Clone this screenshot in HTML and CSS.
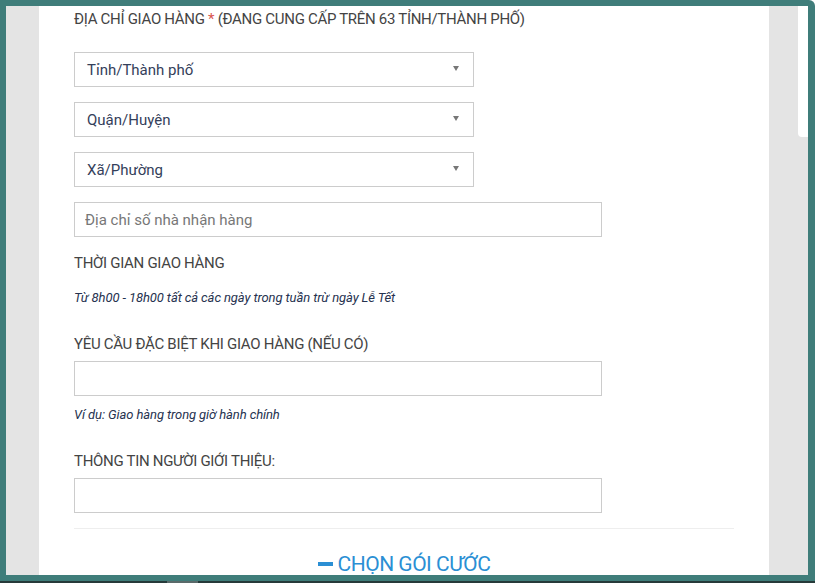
FILE: index.html
```html
<!DOCTYPE html>
<html lang="vi">
<head>
    <meta charset="UTF-8">
    <meta name="viewport" content="width=device-width, initial-scale=1.0">
    <title>Đăng ký dịch vụ</title>
    <link rel="stylesheet" href="styles.css">
</head>
<body>
    <div class="window">
        <div class="viewport">
            <div class="page">
                <!-- Địa chỉ giao hàng -->
                <form class="order-form">
                    <p class="label first">ĐỊA CHỈ GIAO HÀNG <span class="req">*</span> (ĐANG CUNG CẤP TRÊN 63 TỈNH/THÀNH PHỐ)</p>
                    <div class="select-box"><span>Tỉnh/Thành phố</span><i class="caret"></i></div>
                    <div class="select-box"><span>Quận/Huyện</span><i class="caret"></i></div>
                    <div class="select-box"><span>Xã/Phường</span><i class="caret"></i></div>
                    <input class="field" type="text" placeholder="Địa chỉ số nhà nhận hàng">

                    <p class="label">THỜI GIAN GIAO HÀNG</p>
                    <p class="hint">Từ 8h00 - 18h00 tất cả các ngày trong tuần trừ ngày Lễ Tết</p>

                    <p class="label spaced">YÊU CẦU ĐẶC BIỆT KHI GIAO HÀNG (NẾU CÓ)</p>
                    <input class="field" type="text">
                    <p class="hint">Ví dụ: Giao hàng trong giờ hành chính</p>

                    <p class="label spaced">THÔNG TIN NGƯỜI GIỚI THIỆU:</p>
                    <input class="field" type="text">
                </form>

                <hr class="divider">

                <h2 class="section-title"><span class="dash"></span>CHỌN GÓI CƯỚC</h2>
            </div>
            <div class="gutter"></div>
            <div class="side-panel"></div>
        </div>
        <div class="taskbar"><span class="task"></span></div>
    </div>
</body>
</html>
```

FILE: styles.css
```css
/* Khung cửa sổ */
* { box-sizing: border-box; }
html, body { margin: 0; padding: 0; background: #fff; }
body { font-family: Roboto, "Noto Sans", Arial, sans-serif; width: 819px; height: 583px; overflow: hidden; }

.window { width: 815px; height: 583px; background: #3f7d7a; border-top-right-radius: 6px; padding: 6px 7px 0 6px; display: flex; flex-direction: column; }
.viewport { flex: 0 0 569px; background: #e4e4e4; display: flex; padding-left: 33px; overflow: hidden; }
.taskbar { flex: 1; margin: 0 -7px 0 -6px; border-top: 6px solid #3f7d7a; background: #263a3a; position: relative; }
.task { position: absolute; left: 167px; top: 0; width: 31px; height: 2px; background: #5a6a6a; }

/* Nội dung trang */
.page { width: 730px; flex: none; background: #fff; padding: 0 35px; height: 569px; }
.gutter { width: 29px; flex: none; }
.side-panel { width: 10px; height: 131px; background: #fff; border-bottom-left-radius: 4px; flex: none; }

.order-form { display: flex; flex-direction: column; align-items: flex-start; }
.label { margin: 2px 0 16px; font-size: 15px; line-height: 18px; color: #444; letter-spacing: -0.3px; }
.label.first { margin: 4px 0 24px; }
.label.spaced { margin-top: 29px; margin-bottom: 8px; }
.req { color: #d9534f; }

.select-box { width: 400px; height: 35px; border: 1px solid #ccc; margin-bottom: 15px; display: flex; align-items: center; justify-content: space-between; padding: 0 14px 0 12px; font-size: 15px; color: #34405a; }
.caret { width: 0; height: 0; border-left: 3px solid transparent; border-right: 3px solid transparent; border-top: 5px solid #777; margin-top: -2px; }

.field { width: 528px; height: 35px; border: 1px solid #ccc; margin: 0 0 15px; padding: 0 10px; font-family: inherit; font-size: 15px; color: #34405a; }
.field::placeholder { color: #777; }

.hint { margin: 2px 0 0; font-size: 13px; font-style: italic; color: #26324f; line-height: 16px; letter-spacing: -0.1px; }
.order-form > .field + .hint { margin-top: -4px; }

.divider { border: 0; border-top: 1px solid #eee; margin: 0; }

.section-title { margin: 23px 0 0; text-align: center; font-weight: 400; font-size: 21px; color: #2b8fd4; letter-spacing: -0.5px; display: flex; justify-content: center; align-items: center; gap: 5px; }
.dash { width: 15px; height: 4px; background: #2b8fd4; display: inline-block; }
```
